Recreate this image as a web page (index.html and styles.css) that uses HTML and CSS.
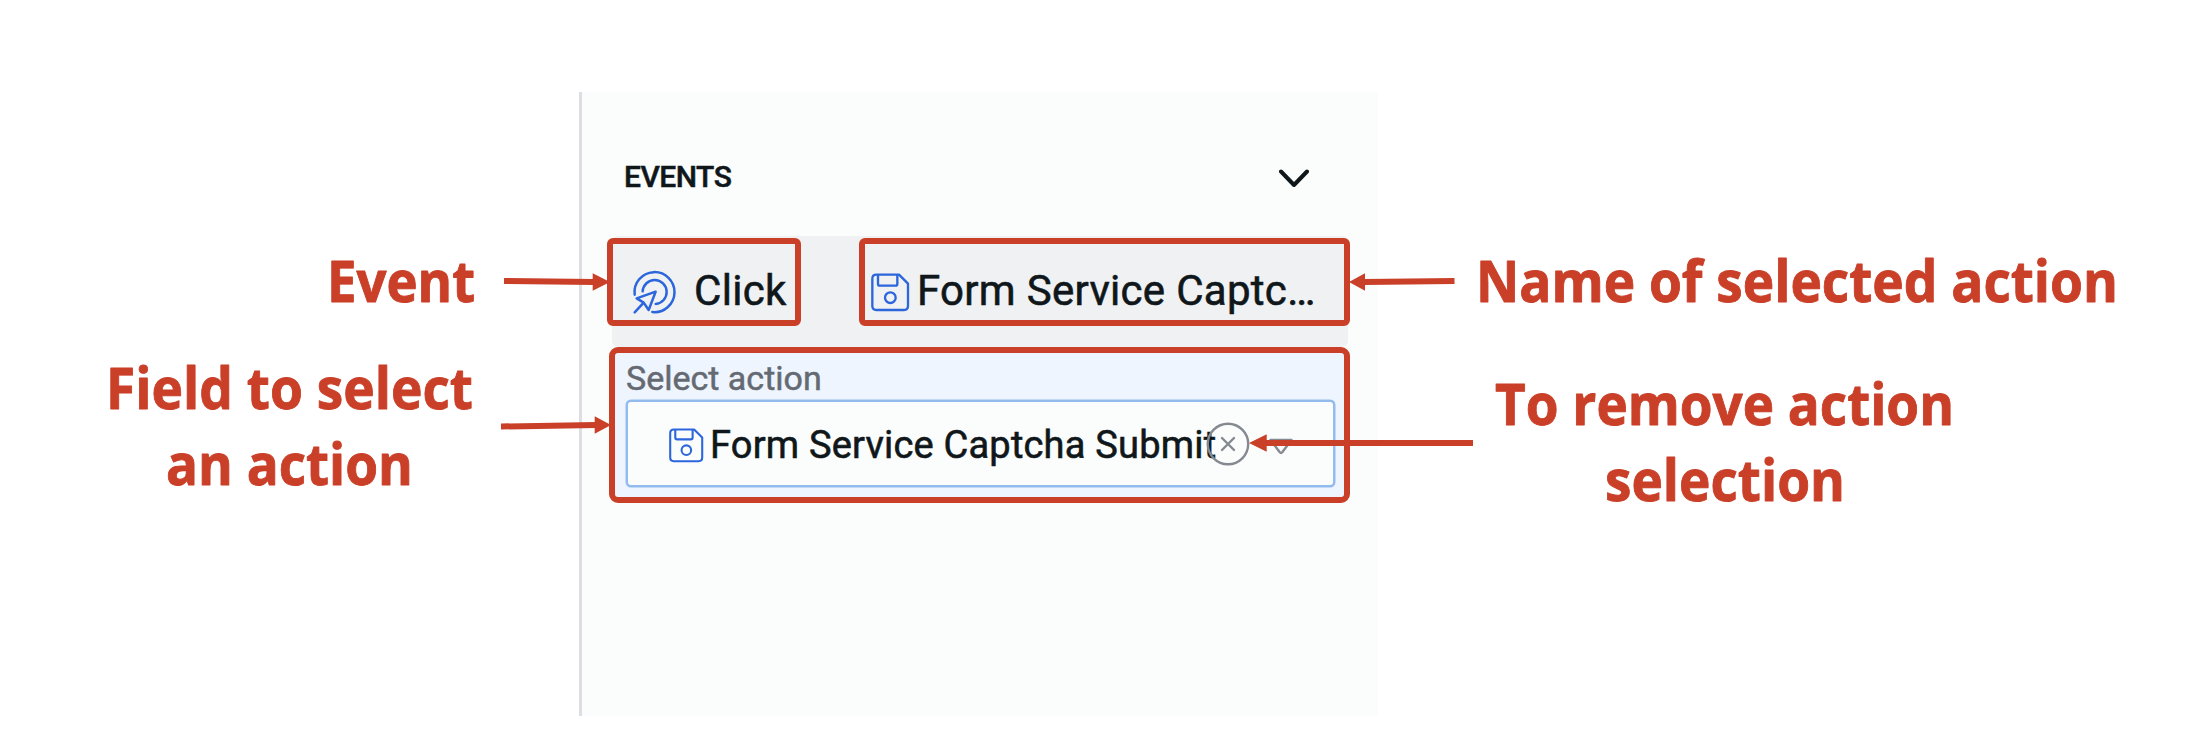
FILE: index.html
```
<!DOCTYPE html>
<html lang="en">
<head>
<meta charset="utf-8">
<title>Events panel</title>
<link rel="stylesheet" href="styles.css">
</head>
<body>
<svg class="defs" width="0" height="0" aria-hidden="true">
  <symbol id="save" viewBox="93 158 117 117">
    <g fill="none" stroke="#2c66dc" stroke-width="7" stroke-linejoin="round">
      <path d="M109 163H177L204 190V257Q204 269 192 269H109Q97 269 97 257V175Q97 163 109 163Z"/>
      <path d="M114 163V190Q114 196 120 196H166Q172 196 172 190V163"/>
      <circle cx="151" cy="232" r="16"/>
    </g>
  </symbol>
</svg>
<main class="stage">
  <section class="panel">
    <header class="panel-head">
      <h2 class="title">EVENTS</h2>
      <svg class="chevron" width="30" height="18" viewBox="0 0 30 18"><path d="M2 2.5 15 16 28 2.5" fill="none" stroke="#10171b" stroke-width="4" stroke-linecap="round" stroke-linejoin="round"/></svg>
    </header>
    <div class="event-row">
      <svg class="click-icon" width="45" height="45" viewBox="186 570 135 135">
        <g fill="none" stroke="#2c66dc" stroke-width="7.5" stroke-linecap="round" stroke-linejoin="round">
          <path d="M194 644A60 60 0 1 1 247 696"/>
          <path d="M218 634A36 36 0 1 1 257 672"/>
          <path d="M257 635 200 655 221 668 236 690ZM221 668 194 697"/>
        </g>
      </svg>
      <span class="event-name">Click</span>
      <svg class="save-icon" width="39" height="39"><use href="#save"/></svg>
      <span class="action-name">Form Service Captc…</span>
    </div>
    <div class="action-field">
      <label class="field-label">Select action</label>
      <div class="field">
        <svg class="field-icon" width="35" height="35"><use href="#save"/></svg>
        <span class="field-value">Form Service Captcha Submit</span>
        <svg class="clear" width="44" height="44" viewBox="-22 -22 44 44"><g fill="none" stroke="#858a90" stroke-width="2.4"><circle r="20.2"/><path d="M-6-6 6 6M6-6-6 6" stroke-linecap="round"/></g></svg>
        <svg class="caret" width="26" height="18" viewBox="0 0 26 18"><path d="M2.5 2H23.5L14.2 14.3Q13 15.6 11.8 14.3Z" fill="none" stroke="#858a90" stroke-width="2.4" stroke-linejoin="round"/></svg>
      </div>
    </div>
  </section>
  <svg class="callouts" width="2212" height="752" viewBox="0 0 2212 752">
    <g fill="none" stroke="#ca3f28" stroke-width="6">
      <rect x="610" y="241" width="188" height="82" rx="3"/>
      <rect x="862" y="241" width="485" height="82" rx="3"/>
      <rect x="612" y="350" width="735" height="150" rx="6"/>
      <path d="M504 281 594 282M501 426.5 596 425M1454.5 281 1364 282M1473 443H1265"/>
    </g>
    <path fill="#ca3f28" d="M592.7 273.3V290.7L610 282ZM594.7 416.3V433.7L611 425ZM1365 273.3V290.7L1349 282ZM1266.7 434.3V451.7L1249 443Z"/>
    <g class="notes">
      <text x="327" y="302" textLength="148" lengthAdjust="spacingAndGlyphs">Event</text>
      <text x="106" y="409" textLength="367" lengthAdjust="spacingAndGlyphs">Field to select</text>
      <text x="166" y="485" textLength="247" lengthAdjust="spacingAndGlyphs">an action</text>
      <text x="1476" y="302" textLength="642" lengthAdjust="spacingAndGlyphs">Name of selected action</text>
      <text x="1495" y="425" textLength="459" lengthAdjust="spacingAndGlyphs">To remove action</text>
      <text x="1605" y="501" textLength="240" lengthAdjust="spacingAndGlyphs">selection</text>
    </g>
  </svg>
</main>
</body>
</html>
```
FILE: styles.css
```
* { box-sizing: border-box; }
body { margin: 0; background: #fff; font-family: Roboto, sans-serif; color: #10171b; }
.defs { display: block; }
.stage { position: relative; display: flex; width: 2212px; height: 752px; padding: 92px 0 0 579px; overflow: hidden; }
.callouts { position: absolute; left: 0; top: 0; }
.notes { fill: #ca3f28; stroke: #ca3f28; stroke-width: 0.9px; stroke-linejoin: round; font-family: "Open Sans", sans-serif; font-weight: 700; font-size: 57px; }

.panel { width: 799px; height: 623.5px; background: #fbfdfc; border-left: 3px solid #dcdee3; padding: 0 30px; }
.panel-head { display: flex; align-items: center; justify-content: space-between; height: 144px; padding: 25px 39px 0 12px; }
.title { margin: 0; font-size: 30px; font-weight: 500; line-height: 36px; letter-spacing: -0.5px; -webkit-text-stroke: 0.5px; }
.chevron { margin-top: 3px; }
.event-row { display: flex; align-items: center; height: 111px; width: 736px; padding: 0 0 1px 20px; background: #f0f1f3; border-radius: 6px; font-size: 42px; line-height: 50px; letter-spacing: 0.3px; -webkit-text-stroke: 0.6px; }
.click-icon { margin-top: 3px; }
.event-name { width: 177px; margin-left: 17px; }
.save-icon { margin-top: 2px; }
.action-name { margin-left: 7px; white-space: nowrap; }
.action-field { width: 736px; height: 154px; padding: 11px 13px 0 14px; background: #eef5ff; border-radius: 8px; }
.field-label { display: block; font-size: 34px; line-height: 40px; color: #656a72; -webkit-text-stroke: 0.5px; }
.field { display: flex; align-items: center; height: 87px; margin-top: 2px; padding-left: 41px; border: 2px solid #93bbee; border-radius: 5px; background: #fbfdfc; box-shadow: 0 0 0 0.5px #93bbee; font-size: 38px; white-space: nowrap; }
.field-icon { margin-top: 3px; }
.field-value { width: 502px; margin: 3px 0 0 6px; letter-spacing: 0.2px; -webkit-text-stroke: 0.6px; }
.clear { flex: none; margin: 1px 0 0 -6px; }
.caret { flex: none; margin: 6px 0 0 18px; }
```
